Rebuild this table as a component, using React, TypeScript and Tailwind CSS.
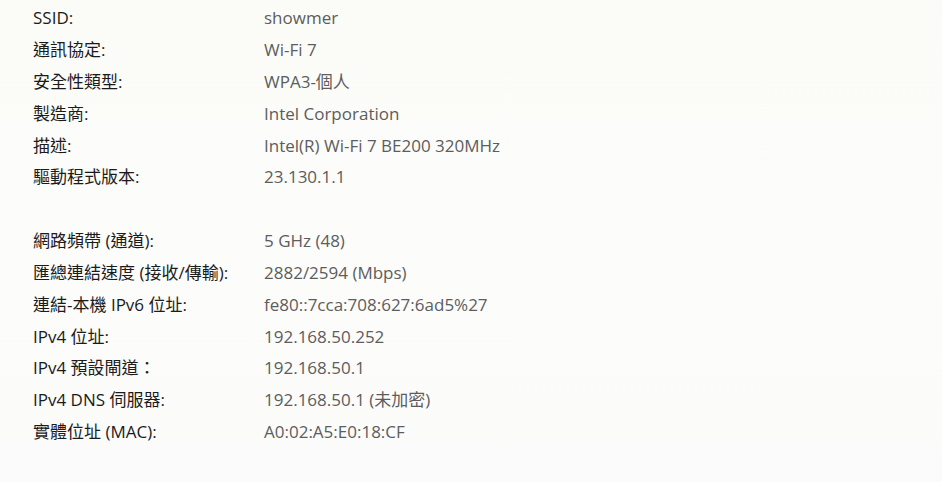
import React from 'react';

type Row = { label: string; value: string } | null;

const rows: Row[] = [
  { label: 'SSID:', value: 'showmer' },
  { label: '通訊協定:', value: 'Wi-Fi 7' },
  { label: '安全性類型:', value: 'WPA3-個人' },
  { label: '製造商:', value: 'Intel Corporation' },
  { label: '描述:', value: 'Intel(R) Wi-Fi 7 BE200 320MHz' },
  { label: '驅動程式版本:', value: '23.130.1.1' },
  null,
  { label: '網路頻帶 (通道):', value: '5 GHz (48)' },
  { label: '匯總連結速度 (接收/傳輸):', value: '2882/2594 (Mbps)' },
  { label: '連結-本機 IPv6 位址:', value: 'fe80::7cca:708:627:6ad5%27' },
  { label: 'IPv4 位址:', value: '192.168.50.252' },
  { label: 'IPv4 預設閘道：', value: '192.168.50.1' },
  { label: 'IPv4 DNS 伺服器:', value: '192.168.50.1 (未加密)' },
  { label: '實體位址 (MAC):', value: 'A0:02:A5:E0:18:CF' },
];

export default function App() {
  return (
    <div
      className="w-[942px] h-[482px] overflow-hidden bg-gradient-to-b from-[#fbfcf8] via-[#fcfcfa] to-[#fbfbfb] pt-[2px] pl-[33px]"
      style={{ fontFamily: '"Open Sans", "Noto Sans CJK TC", sans-serif' }}
    >
      {rows.map((row, i) =>
        row ? (
          <div key={i} className="flex h-[31.85px] items-center text-[17px]">
            <span className="w-[231px] shrink-0 text-[#1b1b1b]">{row.label}</span>
            <span className="text-[#5d5d5d]">{row.value}</span>
          </div>
        ) : (
          <div key={i} className="h-[31.85px]" />
        )
      )}
    </div>
  );
}
